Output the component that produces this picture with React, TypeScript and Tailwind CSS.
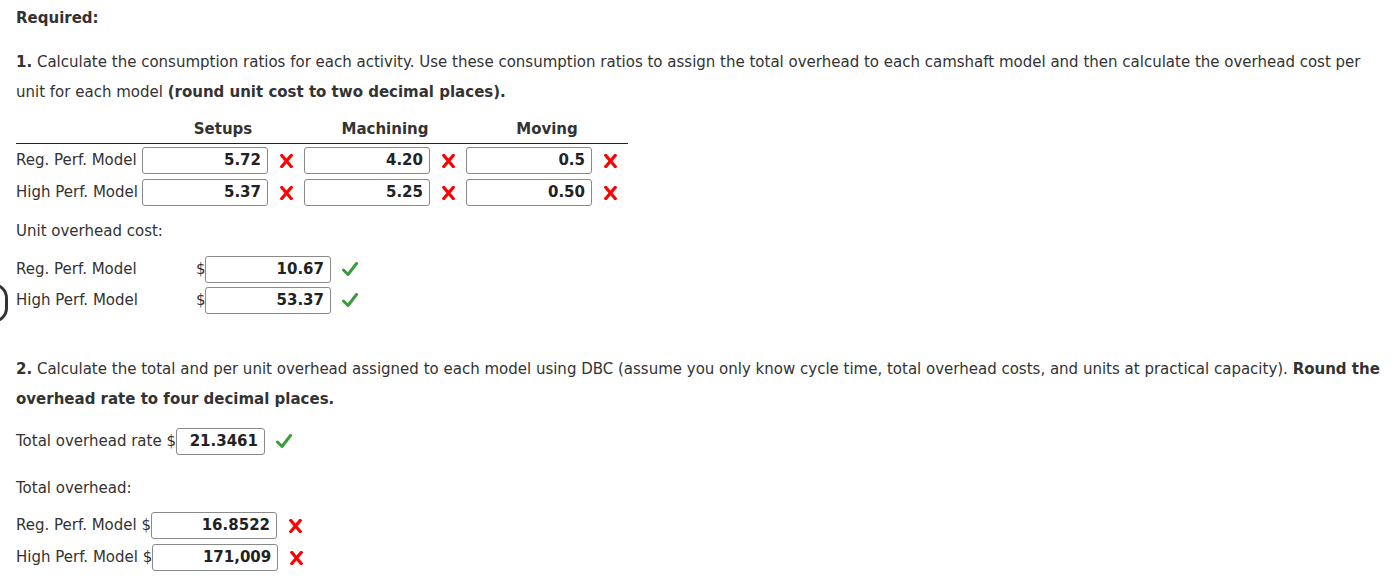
import React from "react";

const XMark = () => (
  <svg width="13" height="14" viewBox="0 0 13 14" className="block">
    <path d="M1.8 1.5 L11.2 12.5 M11.2 1.5 L1.8 12.5" stroke="#f00" strokeWidth="3.2" strokeLinecap="square" fill="none" />
  </svg>
);

const Check = () => (
  <svg width="16" height="15" viewBox="0 0 16 15" className="block">
    <path d="M1.5 8 L6 12.5 L14.5 1.5" stroke="#3c9c3c" strokeWidth="3" fill="none" strokeLinecap="round" strokeLinejoin="round" />
  </svg>
);

const Box = ({ v, w = "w-[126px]" }: { v: string; w?: string }) => (
  <div className={`${w} h-[27px] border border-[#8a8a8a] rounded-[3px] bg-white flex items-center justify-end pr-[6px] font-bold text-[#222]`}>
    {v}
  </div>
);

export default function App() {
  return (
    <div className="relative w-[1395px] h-[588px] bg-white text-[#333] text-[15px] overflow-hidden" style={{ fontFamily: '"DejaVu Sans", Verdana, sans-serif' }}>
      <div className="absolute left-[-22px] top-[283px] w-[30px] h-[40px] rounded-full border-[3px] border-[#333]" />
      <div className="pl-[16px] pr-[8px] pt-[6px]">
        <div className="font-bold leading-[24px]">Required:</div>
        <div className="mt-[17px] leading-[30px]">
          <span className="font-bold">1.</span>{" "}Calculate the consumption ratios for each activity. Use these consumption ratios to assign the total overhead to each camshaft model and then calculate the overhead cost per unit for each model <span className="font-bold">(round unit cost to two decimal places).</span>
        </div>
        <div className="mt-[9px] w-[612px]">
          <div className="flex border-b border-[#222] h-[28px] items-center font-bold">
            <div className="w-[126px]" />
            <div className="w-[162px] text-center">Setups</div>
            <div className="w-[162px] text-center">Machining</div>
            <div className="w-[162px] text-center">Moving</div>
          </div>
          {[
            ["Reg. Perf. Model", "5.72", "4.20", "0.5"],
            ["High Perf. Model", "5.37", "5.25", "0.50"],
          ].map((r, i) => (
            <div key={i} className={`flex items-center ${i === 0 ? "mt-[3px]" : "mt-[5px]"}`}>
              <div className="w-[126px]">{r[0]}</div>
              {r.slice(1).map((v, j) => (
                <div key={j} className="w-[162px] flex items-center">
                  <Box v={v} />
                  <div className="ml-[12px]"><XMark /></div>
                </div>
              ))}
            </div>
          ))}
        </div>
        <div className="mt-[13px] leading-[24px]">Unit overhead cost:</div>
        {[
          ["Reg. Perf. Model", "10.67"],
          ["High Perf. Model", "53.37"],
        ].map((r, i) => (
          <div key={i} className={`flex items-center ${i === 0 ? "mt-[13px]" : "mt-[4px]"}`}>
            <div className="w-[180px]">{r[0]}</div>
            <div className="w-[9px]">$</div>
            <Box v={r[1]} />
            <div className="ml-[11px]"><Check /></div>
          </div>
        ))}
        <div className="mt-[40px] leading-[30px]">
          <span className="font-bold">2.</span>{" "}Calculate the total and per unit overhead assigned to each model using DBC (assume you only know cycle time, total overhead costs, and units at practical capacity). <span className="font-bold">Round the overhead rate to four decimal places.</span>
        </div>
        <div className="flex items-center mt-[14px]">
          <span>Total overhead rate $</span>
          <Box v={"21.3461"} w="w-[89px]" />
          <div className="ml-[11px]"><Check /></div>
        </div>
        <div className="mt-[21px] leading-[24px]">Total overhead:</div>
        {[
          ["Reg. Perf. Model $", "16.8522"],
          ["High Perf. Model $", "171,009"],
        ].map((r, i) => (
          <div key={i} className={`flex items-center ${i === 0 ? "mt-[12px]" : "mt-[5px]"}`}>
            <div>{r[0]}</div>
            <Box v={r[1]} />
            <div className="ml-[12px]"><XMark /></div>
          </div>
        ))}
      </div>
    </div>
  );
}
